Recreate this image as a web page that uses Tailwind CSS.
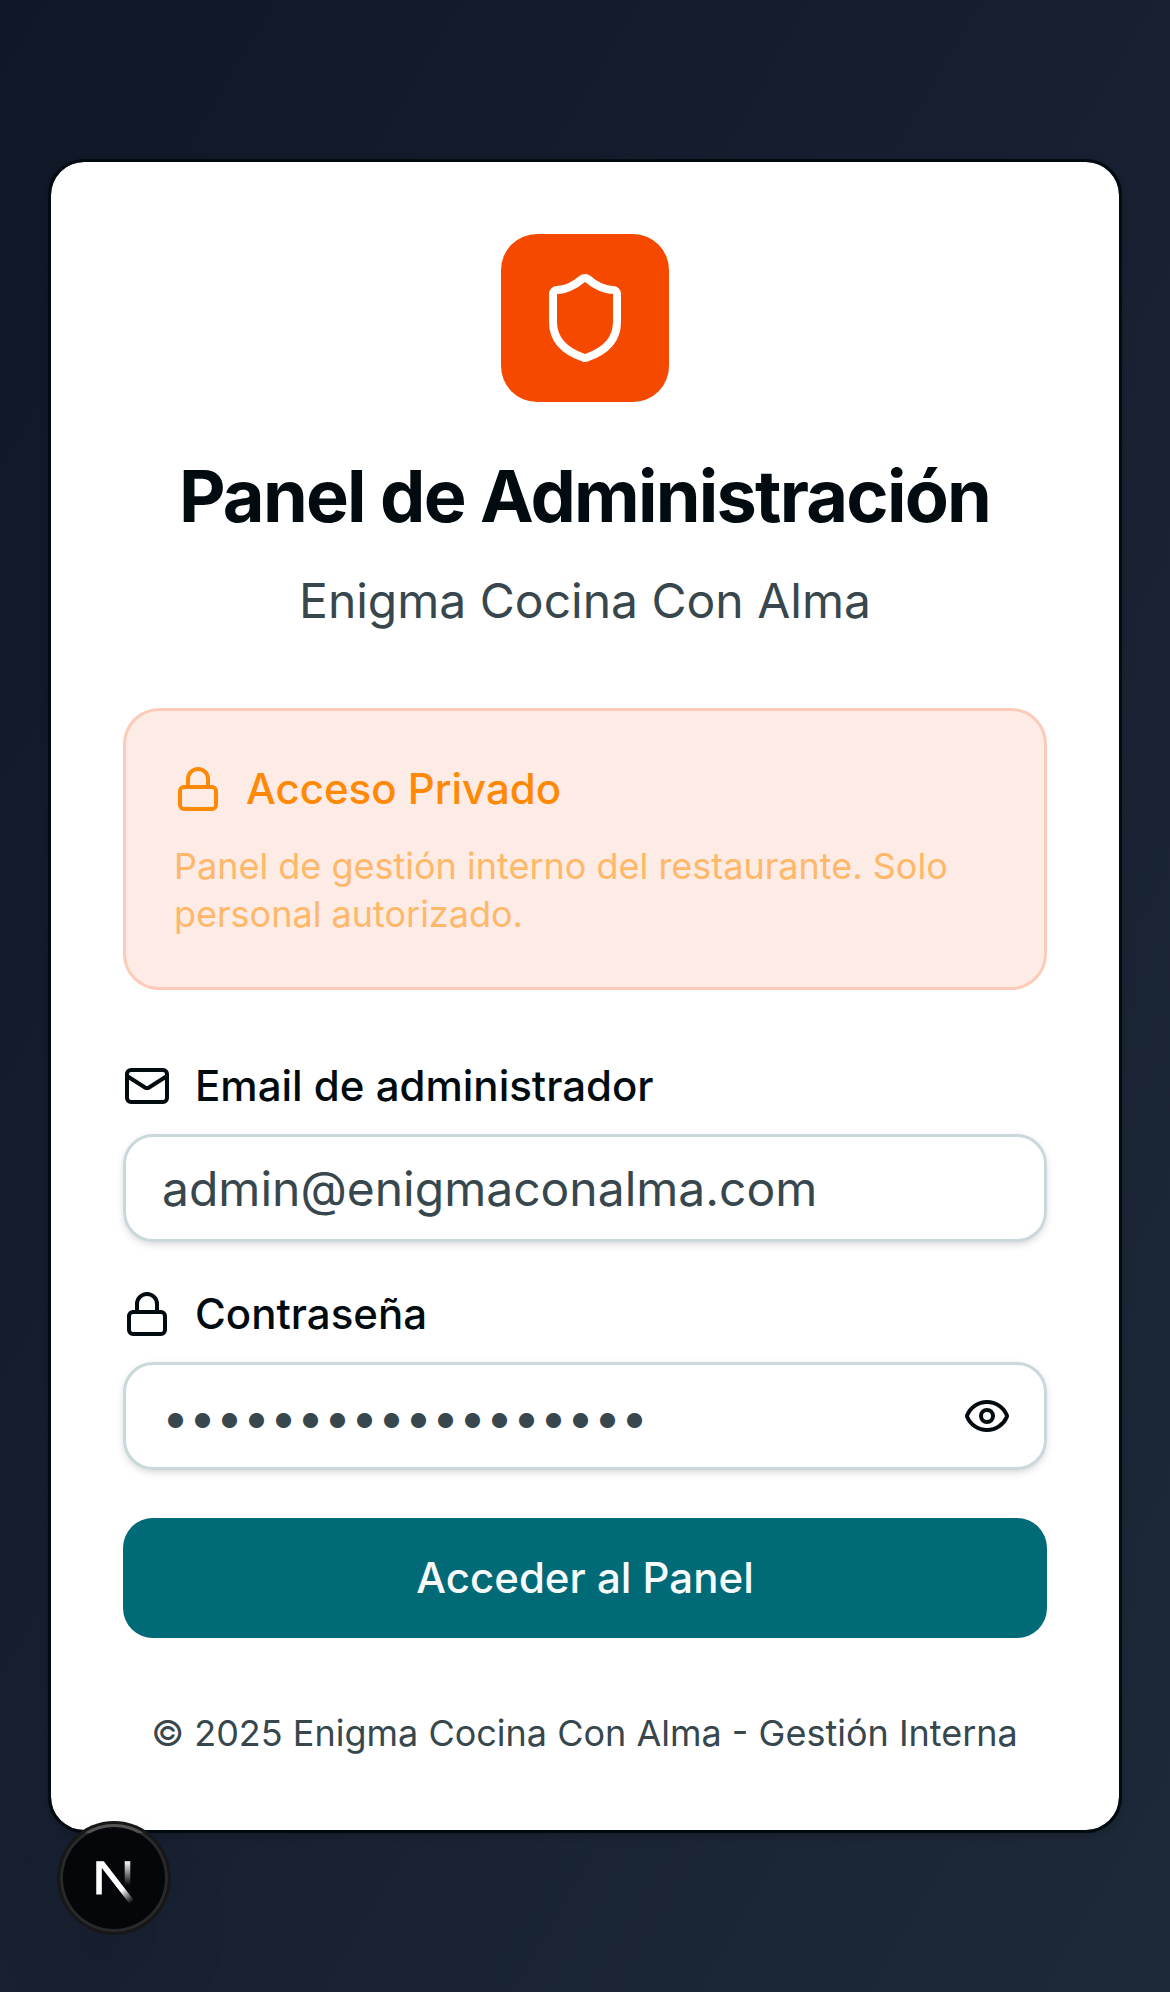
<!DOCTYPE html>
<html lang="es">
<head>
<meta charset="utf-8">
<title>Panel de Administración</title>
<script src="https://cdn.jsdelivr.net/npm/@tailwindcss/browser@4"></script>
</head>
<body class="font-['Inter',sans-serif] text-[#020b10]">
<main class="relative flex h-[1992px] w-[1170px] items-center justify-center bg-linear-to-br from-gray-900 to-gray-800 px-12">
  <section class="flex w-full flex-col rounded-[36px] border-[3px] border-[#020b10] bg-white bg-clip-padding p-[72px] shadow-[0_3px_9px_rgba(0,0,0,0.1),0_3px_6px_-3px_rgba(0,0,0,0.1)]">
    <div class="mx-auto flex size-[168px] items-center justify-center rounded-[36px] bg-[#f54900]">
      <svg class="size-24 text-white" viewBox="0 0 24 24" fill="none" stroke="currentColor" stroke-width="2" stroke-linecap="round" stroke-linejoin="round"><path d="M20 13c0 5-3.5 7.5-7.66 8.95a1 1 0 0 1-.67-.01C7.5 20.5 4 18 4 13V6a1 1 0 0 1 1-1c2 0 4.5-1.2 6.24-2.72a1.17 1.17 0 0 1 1.52 0C14.51 3.81 17 5 19 5a1 1 0 0 1 1 1z"/></svg>
    </div>
    <h1 class="mt-[49px] pr-px text-center text-[72px] leading-[90px] font-bold tracking-[-1.77px]">Panel de Administración</h1>
    <p class="mt-6 text-center text-[48px] leading-[72px] text-[#37474d]">Enigma Cocina Con Alma</p>
    <div class="mt-[71px] flex flex-col gap-6 rounded-[36px] border-[3px] border-[#fccbb9] bg-[#fdebe5] p-12">
      <div class="flex h-[60px] items-center gap-6 text-[42px] font-medium text-[#ff8904]">
        <svg class="size-12" viewBox="0 0 24 24" fill="none" stroke="currentColor" stroke-width="2" stroke-linecap="round" stroke-linejoin="round"><rect width="18" height="11" x="3" y="11" rx="2"/><path d="M7 11V7a5 5 0 0 1 10 0v4"/></svg>
        <span class="pb-px">Acceso Privado</span>
      </div>
      <p class="-mt-px pb-px text-[36px] leading-[48px] text-[#ffb86a]">Panel de gestión interno del restaurante. Solo personal autorizado.</p>
    </div>
    <label class="mt-[72px] flex h-12 items-center gap-6 text-[42px] font-medium">
      <svg class="size-12" viewBox="0 0 24 24" fill="none" stroke="currentColor" stroke-width="2" stroke-linecap="round" stroke-linejoin="round"><rect width="20" height="16" x="2" y="4" rx="2"/><path d="m22 7-8.991 5.727a2 2 0 0 1-2.009 0L2 7"/></svg>
      <span class="pb-px">Email de administrador</span>
    </label>
    <div class="mt-6 flex h-[108px] items-center rounded-[30px] border-[3px] border-[#cad8db] px-9 text-[48px] text-[#37474d] shadow-[0_3px_9px_rgba(0,0,0,0.1),0_3px_6px_-3px_rgba(0,0,0,0.1)]"><span class="pt-0.5">admin@enigmaconalma.com</span></div>
    <label class="mt-12 flex h-12 items-center gap-6 text-[42px] font-medium">
      <svg class="size-12" viewBox="0 0 24 24" fill="none" stroke="currentColor" stroke-width="2" stroke-linecap="round" stroke-linejoin="round"><rect width="18" height="11" x="3" y="11" rx="2"/><path d="M7 11V7a5 5 0 0 1 10 0v4"/></svg>
      <span class="pb-px">Contraseña</span>
    </label>
    <div class="mt-6 flex h-[108px] items-center justify-between rounded-[30px] border-[3px] border-[#cad8db] pr-[33px] pl-9 shadow-[0_3px_9px_rgba(0,0,0,0.1),0_3px_6px_-3px_rgba(0,0,0,0.1)]"><span class="pt-0.5 text-[48px] text-[#37474d]">••••••••••••••••••</span>
      <svg class="size-12" viewBox="0 0 24 24" fill="none" stroke="currentColor" stroke-width="2" stroke-linecap="round" stroke-linejoin="round"><path d="M2.062 12.348a1 1 0 0 1 0-.696 10.75 10.75 0 0 1 19.876 0 1 1 0 0 1 0 .696 10.75 10.75 0 0 1-19.876 0"/><circle cx="12" cy="12" r="3"/></svg>
    </div>
    <button class="mt-12 h-[120px] rounded-[30px] bg-[#006b77] pb-px text-[42px] font-medium text-[#f8fafc]">Acceder al Panel</button>
    <p class="mt-[71px] mb-px pr-px text-center text-[36px] leading-[48px] text-[#37474d]">© 2025 Enigma Cocina Con Alma - Gestión Interna</p>
  </section>
  <!-- Floating dev tools badge -->
  <div class="absolute bottom-[60px] left-[60px] size-[108px] rounded-full bg-[#050609] shadow-[0_0_0_3px_#171717,inset_0_0_0_3px_#28292b,0_48px_96px_-24px_rgba(0,0,0,0.24)]">
    <svg class="size-[108px]" viewBox="0 0 36 36" fill="none">
      <defs>
        <linearGradient id="diag" x1="9.95555" y1="11.1226" x2="15.4778" y2="17.9671" gradientUnits="userSpaceOnUse"><stop stop-color="white"/><stop offset="0.604072" stop-color="white" stop-opacity="0"/></linearGradient>
        <linearGradient id="stem" x1="11.8222" y1="1.40039" x2="11.791" y2="9.62542" gradientUnits="userSpaceOnUse"><stop stop-color="white"/><stop offset="1" stop-color="white" stop-opacity="0"/></linearGradient>
        <linearGradient id="rim" x1="0" y1="0" x2="0" y2="3.2" gradientUnits="userSpaceOnUse"><stop stop-color="#555"/><stop offset="0.9" stop-color="#505050"/><stop offset="1" stop-color="#505050" stop-opacity="0"/></linearGradient>
        <mask id="cut" maskUnits="userSpaceOnUse" x="0" y="1.5" width="20" height="20"><rect y="1.5" width="20" height="20" fill="white"/></mask>
      </defs>
      <path d="M8.7 3.2A17.5 17.5 0 0 1 27.3 3.2" stroke="url(#rim)"/>
      <g transform="translate(10.67 10.9)" stroke-width="1.86">
        <path d="M13.3 15.2 2.34 1V12.6" stroke="url(#diag)" mask="url(#cut)"/>
        <path d="M11.825 1.5V13.1" stroke="url(#stem)"/>
      </g>
    </svg>
  </div>
</main>
</body>
</html>
